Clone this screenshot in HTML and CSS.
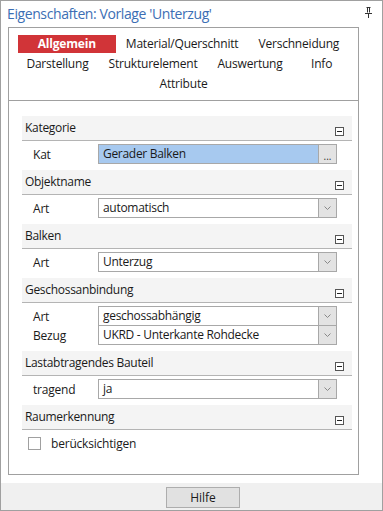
FILE: index.html
```html
<!DOCTYPE html>
<html lang="de">
<head>
    <meta charset="UTF-8">
    <title>Eigenschaften</title>
    <link rel="stylesheet" href="styles.css">
</head>
<body>
    <div class="window">
        <div class="titlebar">
            <span class="title">Eigenschaften: Vorlage 'Unterzug'</span>
            <svg class="pin" width="7" height="11" viewBox="0 0 7 11">
                <path d="M1.5 0.5h4M2.5 0.5v5M4.5 0.5v5M0 6.5h7M3.5 6.5v4.5" stroke="#333" stroke-width="1" fill="none"/>
            </svg>
        </div>

        <div class="panel">
            <!-- Tab buttons -->
            <div class="tabs">
                <div class="tab-row">
                    <span class="tab active">Allgemein</span>
                    <span class="tab">Material/Querschnitt</span>
                    <span class="tab">Verschneidung</span>
                </div>
                <div class="tab-row">
                    <span class="tab">Darstellung</span>
                    <span class="tab">Strukturelement</span>
                    <span class="tab">Auswertung</span>
                    <span class="tab">Info</span>
                </div>
                <div class="tab-row">
                    <span class="tab">Attribute</span>
                </div>
            </div>

            <!-- Property groups -->
            <div class="props">
                <div class="group">
                    <div class="group-head"><span>Kategorie</span><span class="collapse"></span></div>
                    <div class="group-body">
                        <div class="prop">
                            <label>Kat</label>
                            <div class="field selected">
                                <span class="value">Gerader Balken</span>
                                <span class="field-btn dots">...</span>
                            </div>
                        </div>
                    </div>
                </div>

                <div class="group">
                    <div class="group-head"><span>Objektname</span><span class="collapse"></span></div>
                    <div class="group-body">
                        <div class="prop">
                            <label>Art</label>
                            <div class="field">
                                <span class="value">automatisch</span>
                                <span class="field-btn"><svg width="7" height="4" viewBox="0 0 7 4"><path d="M0.5 0.5l3 3 3-3" stroke="#888" fill="none"/></svg></span>
                            </div>
                        </div>
                    </div>
                </div>

                <div class="group">
                    <div class="group-head"><span>Balken</span><span class="collapse"></span></div>
                    <div class="group-body">
                        <div class="prop">
                            <label>Art</label>
                            <div class="field">
                                <span class="value">Unterzug</span>
                                <span class="field-btn"><svg width="7" height="4" viewBox="0 0 7 4"><path d="M0.5 0.5l3 3 3-3" stroke="#888" fill="none"/></svg></span>
                            </div>
                        </div>
                    </div>
                </div>

                <div class="group">
                    <div class="group-head"><span>Geschossanbindung</span><span class="collapse"></span></div>
                    <div class="group-body">
                        <div class="prop">
                            <label>Art</label>
                            <div class="field">
                                <span class="value">geschossabhängig</span>
                                <span class="field-btn"><svg width="7" height="4" viewBox="0 0 7 4"><path d="M0.5 0.5l3 3 3-3" stroke="#888" fill="none"/></svg></span>
                            </div>
                        </div>
                        <div class="prop">
                            <label>Bezug</label>
                            <div class="field">
                                <span class="value">UKRD - Unterkante Rohdecke</span>
                                <span class="field-btn"><svg width="7" height="4" viewBox="0 0 7 4"><path d="M0.5 0.5l3 3 3-3" stroke="#888" fill="none"/></svg></span>
                            </div>
                        </div>
                    </div>
                </div>

                <div class="group">
                    <div class="group-head"><span>Lastabtragendes Bauteil</span><span class="collapse"></span></div>
                    <div class="group-body">
                        <div class="prop">
                            <label>tragend</label>
                            <div class="field">
                                <span class="value">ja</span>
                                <span class="field-btn"><svg width="7" height="4" viewBox="0 0 7 4"><path d="M0.5 0.5l3 3 3-3" stroke="#888" fill="none"/></svg></span>
                            </div>
                        </div>
                    </div>
                </div>

                <div class="group">
                    <div class="group-head"><span>Raumerkennung</span><span class="collapse"></span></div>
                    <div class="group-body">
                        <div class="check-row">
                            <span class="checkbox"></span>
                            <span>berücksichtigen</span>
                        </div>
                    </div>
                </div>
            </div>
        </div>

        <div class="footer">
            <button class="help-btn">Hilfe</button>
        </div>
    </div>
</body>
</html>
```

FILE: styles.css
```css
body {
    margin: 0;
    font-family: 'Open Sans', 'Noto Sans', sans-serif;
    font-size: 12px;
    color: #1a1a1a;
    background: #fff;
}
.window {
    width: 383px;
    height: 511px;
    box-sizing: border-box;
    border: 1px solid #a0a0a0;
    display: flex;
    flex-direction: column;
    background: #fff;
}
.titlebar {
    height: 26px;
    display: flex;
    align-items: center;
    padding: 0 10px 0 6px;
    justify-content: space-between;
}
.title {
    color: #3c6eb4;
    font-size: 14px;
    letter-spacing: -0.4px;
    margin-top: -2px;
}
.pin {
    margin-top: -4px;
}
.panel {
    margin-left: 7px;
    width: 351px;
    height: 448px;
    box-sizing: border-box;
    border: 1px solid #a0a0a0;
}
/* Tabs */
.tabs {
    height: 73px;
    box-sizing: border-box;
    padding-top: 6px;
    border-bottom: 1px solid #a0a0a0;
}
.tab-row {
    display: flex;
    justify-content: center;
    height: 20px;
    align-items: center;
}
.tab {
    min-width: 58px;
    padding: 0 10px;
    box-sizing: border-box;
    text-align: center;
    line-height: 18px;
    white-space: nowrap;
    letter-spacing: -0.2px;
}
.tab.active {
    min-width: 98px;
    background: #d13438;
    color: #fff;
    font-weight: bold;
}
/* Property groups */
.props {
    padding: 15px 6px 0 13px;
}
.group-head {
    height: 24px;
    background: #f4f4f4;
    border-bottom: 1px solid #b4b4b4;
    position: relative;
    padding-left: 3px;
    line-height: 24px;
    letter-spacing: -0.3px;
}
.collapse {
    position: absolute;
    right: 8px;
    bottom: 4px;
    width: 7px;
    height: 7px;
    border: 1px solid #555;
    background: #fff;
}
.collapse::after {
    content: '';
    position: absolute;
    left: 1px;
    right: 1px;
    top: 3px;
    height: 1px;
    background: #222;
}
.group-body {
    padding: 3px 0 6px;
}
.prop {
    display: flex;
    align-items: center;
    height: 20px;
}
.prop + .prop {
    margin-top: -1px;
}
.prop label {
    width: 65px;
    padding-left: 11px;
    letter-spacing: -0.2px;
}
.field {
    width: 239px;
    height: 20px;
    box-sizing: border-box;
    border: 1px solid #a8a8a8;
    display: flex;
    background: #fff;
}
.field.selected {
    background: #a7c9ef;
}
.value {
    flex: 1;
    padding-left: 4px;
    line-height: 18px;
    letter-spacing: -0.3px;
}
.field-btn {
    width: 17px;
    border-left: 1px solid #a8a8a8;
    background: #e3e3e3;
    display: flex;
    align-items: center;
    justify-content: center;
}
.dots {
    align-items: flex-end;
    font-size: 10px;
    line-height: 14px;
    color: #333;
}
.check-row {
    display: flex;
    align-items: center;
    height: 20px;
    padding-left: 6px;
    letter-spacing: -0.2px;
}
.checkbox {
    width: 13px;
    height: 13px;
    box-sizing: border-box;
    border: 1px solid #a0a0a0;
    margin-right: 10px;
}
/* Footer */
.footer {
    margin-top: 8px;
    flex: 1;
    background: #f0f0f0;
    padding: 4px 0 0 165px;
}
.help-btn {
    width: 74px;
    height: 21px;
    border: 1px solid #adadad;
    background: #e1e1e1;
    font-family: inherit;
    font-size: 12px;
    color: #1a1a1a;
    padding: 0;
}
```
